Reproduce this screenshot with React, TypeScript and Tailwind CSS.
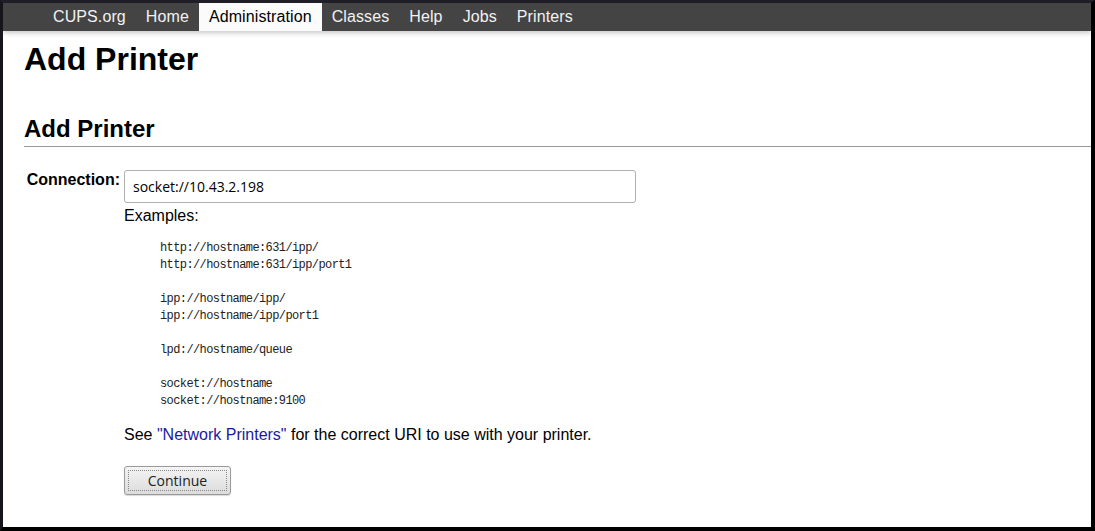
import React from 'react'

const navItems = ['CUPS.org', 'Home', 'Administration', 'Classes', 'Help', 'Jobs', 'Printers']

const examples = [
  'http://hostname:631/ipp/',
  'http://hostname:631/ipp/port1',
  '',
  'ipp://hostname/ipp/',
  'ipp://hostname/ipp/port1',
  '',
  'lpd://hostname/queue',
  '',
  'socket://hostname',
  'socket://hostname:9100',
]

export default function App() {
  return (
    <div className="box-border h-[531px] w-full overflow-hidden border-t-[3px] border-l-[3px] border-r-4 border-b-4 border-t-[#1f1e26] border-l-[#16151c] border-r-black border-b-black bg-white font-['Liberation_Sans',Arial,sans-serif] text-black">
      {/* Top navigation */}
      <nav className="relative z-10 flex h-[28px] bg-[#444] pl-[40px] shadow-[0_2px_5px_rgba(0,0,0,0.22)]">
        {navItems.map((item) => (
          <span
            key={item}
            className={
              item === 'Administration'
                ? 'flex items-center bg-[#fbfbfb] px-[10px] text-[16px] tracking-[0.1px] text-black'
                : 'flex items-center px-[10px] text-[16px] tracking-[0.1px] text-[#f2f2f2]'
            }
          >
            {item}
          </span>
        ))}
      </nav>

      <div className="pl-[21px]">
        <h1 className="mt-[10px] text-[32px] font-bold leading-[37px]">Add Printer</h1>

        <h2 className="mt-[37px] border-b border-[#999] pb-[3px] text-[24px] font-bold leading-[28px]">Add Printer</h2>

        <div className="mt-[23px] flex items-start">
          <div className="w-[96px] pt-[1px] text-right text-[16px] font-bold leading-[18px]">Connection:</div>
          <div className="ml-[4px] flex flex-col">
            <input
              type="text"
              defaultValue="socket://10.43.2.198"
              className="box-border h-[33px] w-[512px] rounded-[3px] border border-[#b0b0b0] bg-white px-[8px] font-['Open_Sans',sans-serif] text-[14px] text-black outline-none"
            />
            <div className="mt-[4px] text-[16px] leading-[18px]">Examples:</div>
            <pre className="mt-[15px] pl-[36px] font-['Liberation_Mono','Courier_New',monospace] text-[12px] leading-[17px] tracking-[-0.6px] text-[#222]">
              {examples.join('\n')}
            </pre>
            <p className="mt-[16px] text-[16px] leading-[18px]">
              See <span className="text-[#1a1aa0]">"Network Printers"</span> for the correct URI to use with your printer.
            </p>
            <div className="mt-[22px]">
              <button className="box-border h-[29px] w-[107px] rounded-[3px] border border-[#9a9a9a] bg-gradient-to-b from-[#f4f4f4] to-[#dcdcdc] p-[3px] font-['Open_Sans',sans-serif] text-[14px] text-[#222] shadow-[0_1px_1px_rgba(0,0,0,0.15)]">
                <span className="flex h-full w-full items-center justify-center border border-dotted border-[#888]">Continue</span>
              </button>
            </div>
          </div>
        </div>
      </div>
    </div>
  )
}
